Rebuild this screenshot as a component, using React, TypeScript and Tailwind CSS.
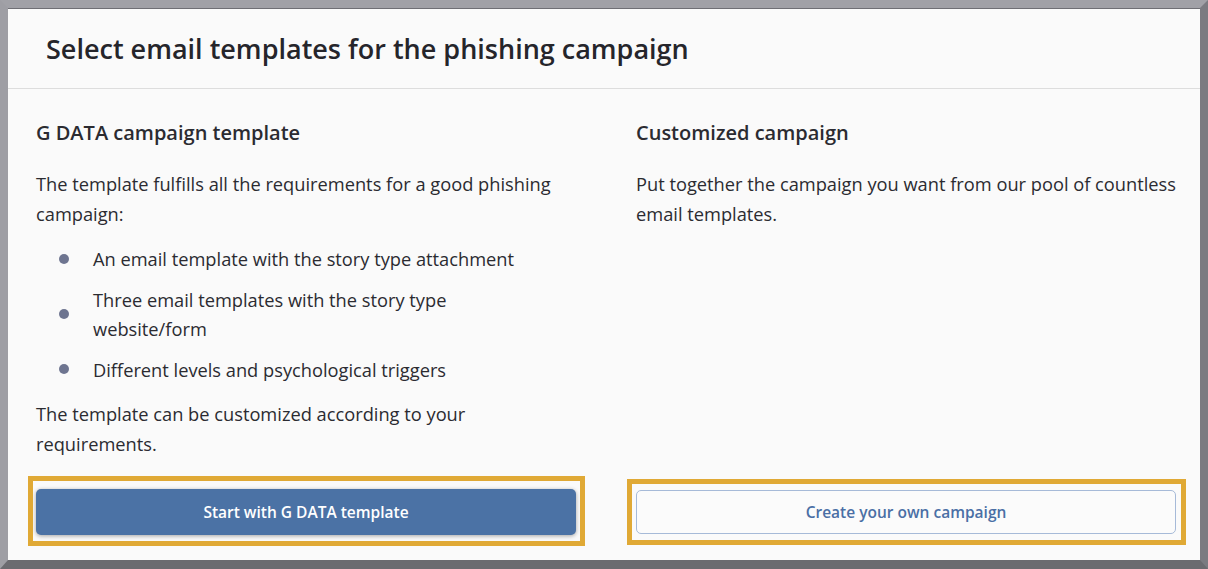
import React from "react";

const font = { fontFamily: "'Open Sans', Lato, sans-serif" };

export default function App() {
  return (
    <div
      className="w-[1208px] h-[569px] box-border border-t-[8px] border-l-[8px] border-r-[8px] border-b-[9px] border-t-[#a1a1a7] border-l-[#9e9ea4] border-r-[#7b7b81] border-b-[#6b6b70] bg-[#fafafa] text-[#2b2b31] flex flex-col"
      style={font}
    >
      <div className="h-[81px] shrink-0 border-t border-t-[#6f6f75] border-b border-b-[#dddddd] flex items-center pl-[38px]">
        <h1 className="text-[27px] font-semibold text-[#25252b] leading-none">
          Select email templates for the phishing campaign
        </h1>
      </div>
      <div className="flex-1 grid grid-cols-[540px_540px] gap-x-[60px] pl-[28px] pr-[24px] pt-[30px] pb-[25px]">
        <div className="flex flex-col">
          <h2 className="text-[20px] font-semibold leading-[28px]">G DATA campaign template</h2>
          <p className="mt-[22px] text-[18.25px] leading-[29.5px]">
            The template fulfills all the requirements for a good phishing campaign:
          </p>
          <ul className="mt-[16px] flex flex-col gap-[11px] text-[18.25px] leading-[29.5px]">
            {[
              "An email template with the story type attachment",
              "Three email templates with the story type website/form",
              "Different levels and psychological triggers",
            ].map((t) => (
              <li key={t} className="flex items-center">
                <span className="w-[10px] h-[10px] rounded-full bg-[#6e7590] ml-[23px] mr-[24px] shrink-0" />
                <span className="w-[460px]">{t}</span>
              </li>
            ))}
          </ul>
          <p className="mt-[15px] text-[18.25px] leading-[29.5px]">
            The template can be customized according to your requirements.
          </p>
          <div className="mt-auto relative">
            <div className="absolute left-[-8px] right-[-9px] top-[-13px] bottom-[-11px] border-[5px] border-[#e0a935] pointer-events-none" />
            <button className="w-full h-[46px] pt-[2px] rounded-[5px] bg-[#4b72a5] text-white text-[15.5px] font-semibold shadow-[0_1px_4px_rgba(0,0,0,0.35)]">
              Start with G DATA template
            </button>
          </div>
        </div>
        <div className="flex flex-col">
          <h2 className="text-[20px] font-semibold leading-[28px]">Customized campaign</h2>
          <p className="mt-[22px] text-[18.25px] leading-[29.5px]">
            Put together the campaign you want from our pool of countless email templates.
          </p>
          <div className="mt-auto relative mb-[1px]">
            <div className="absolute left-[-9px] right-[-10px] top-[-11px] bottom-[-11px] border-[5px] border-[#e0a935] pointer-events-none" />
            <button className="w-full h-[44px] pt-[2px] rounded-[5px] bg-[#fbfbfb] border border-[#a6bad8] text-[#4a6fa5] text-[15.5px] font-semibold">
              Create your own campaign
            </button>
          </div>
        </div>
      </div>
    </div>
  );
}
